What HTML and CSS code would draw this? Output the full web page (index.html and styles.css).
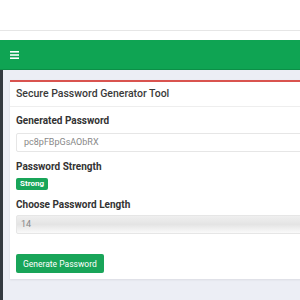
FILE: index.html
```html
<!DOCTYPE html>
<html>
<head>
<meta charset="utf-8">
<link rel="stylesheet" href="styles.css">
</head>
<body>
<div class="topbar"></div>
<nav class="navbar">
  <span class="burger">
    <svg width="9" height="8" viewBox="0 0 9 8"><rect x="0" y="0" width="9" height="1.6" fill="#fff"/><rect x="0" y="3.2" width="9" height="1.6" fill="#fff"/><rect x="0" y="6.4" width="9" height="1.6" fill="#fff"/></svg>
  </span>
</nav>
<div class="main">
  <div class="sidebar"></div>
  <div class="content">
    <div class="card">
      <div class="card-header">Secure Password Generator Tool</div>
      <div class="card-body">
        <div class="group g1">
          <label>Generated Password</label>
          <div class="input">pc8pFBpGsAObRX</div>
        </div>
        <div class="group g2">
          <label>Password Strength</label>
          <span class="badge">Strong</span>
        </div>
        <div class="group g3">
          <label>Choose Password Length</label>
          <div class="input select">14</div>
        </div>
        <div class="actions">
          <button class="btn">Generate Password</button>
        </div>
      </div>
    </div>
  </div>
</div>
</body>
</html>
```
FILE: styles.css
```css
* { box-sizing: border-box; }
html, body { margin: 0; padding: 0; }
body {
  width: 300px;
  height: 300px;
  overflow: hidden;
  background: #eceef5;
  font-family: "Roboto", "Liberation Sans", Arial, sans-serif;
}
.topbar {
  height: 40px;
  background: #fff;
  border-top: 30px solid #fff;
  box-shadow: inset 0 1px 0 #e6e6e6;
}
.navbar {
  height: 30px;
  background: #0fa453;
  border-bottom: 1px solid #0c8f47;
  display: flex;
  align-items: center;
  padding-left: 10px;
}
.burger { display: flex; }
.main {
  display: flex;
  height: 230px;
}
.sidebar {
  width: 3px;
  background: #343a40;
  flex: none;
}
.content {
  flex: 1;
  min-width: 0;
  overflow: hidden;
  padding: 10px 0 0 7px;
}
.card {
  margin-right: -20px;
  background: #fff;
  border-top: 2px solid #d9534f;
  box-shadow: 0 1px 2px rgba(0,0,0,0.08);
}
.card-header {
  font-family: "Roboto", sans-serif;
  font-weight: 500;
  font-size: 10.5px;
  line-height: 12px;
  color: #3a3a3a;
  height: 25px;
  padding: 6px 6px 0;
  border-bottom: 1px solid #eee;
}
.card-body {
  padding: 8px 6px 6px;
}
.group {
  display: flex;
  flex-direction: column;
  align-items: stretch;
}
label {
  display: block;
  font-weight: bold;
  font-size: 10px;
  line-height: 12px;
  color: #333;
  margin-bottom: 6px;
}
.g1 { margin-bottom: 9px; }
.g2 { margin-bottom: 9px; align-items: flex-start; }
.g2 label { margin-bottom: 5px; }
.g3 label { margin-bottom: 4px; }
.input {
  height: 19px;
  border: 1px solid #e6e6e6;
  border-radius: 2px;
  font-size: 9px;
  line-height: 11px;
  color: #888;
  padding: 3px 7px;
}
.select {
  background: linear-gradient(#efefef, #e4e4e4 50%, #fafafa);
  padding-left: 4px;
}
.badge {
  display: block;
  background: #19a559;
  color: #fff;
  font-weight: bold;
  font-size: 8px;
  line-height: 8px;
  padding: 2px 4px;
  border-radius: 2px;
}
.actions {
  padding-top: 20px;
}
.btn {
  display: block;
  background: #19a559;
  color: #fff;
  border: none;
  border-radius: 2px;
  font-family: "Roboto", sans-serif;
  font-size: 8.5px;
  height: 19px;
  padding: 0 7px;
}
```
